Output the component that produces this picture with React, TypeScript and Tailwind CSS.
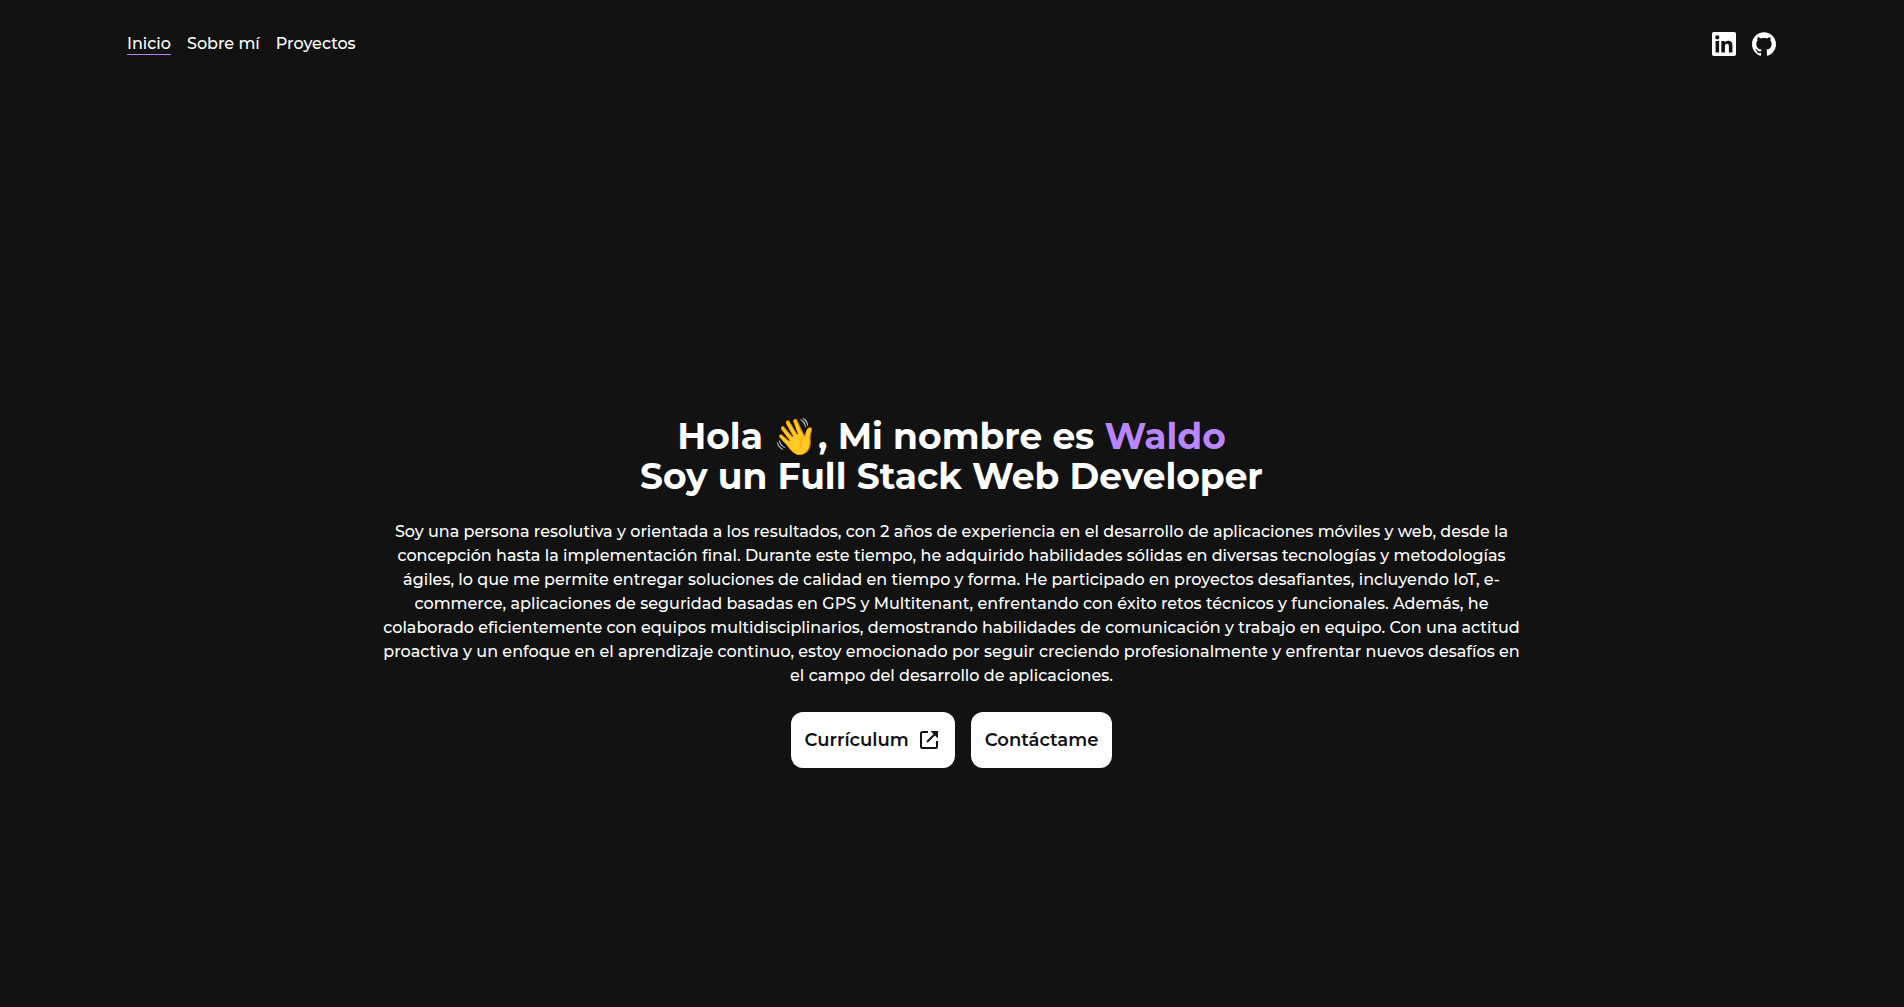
import { SiGithub } from "react-icons/si";

const links = [
  { label: "Inicio", href: "#inicio", active: true },
  { label: "Sobre mí", href: "#sobre-mi", active: false },
  { label: "Proyectos", href: "#proyectos", active: false },
];

function LinkedinIcon() {
  return (
    <svg viewBox="0 0 24 24" fill="currentColor" className="size-6" aria-hidden="true">
      <path d="M20.447 20.452h-3.554v-5.569c0-1.328-.027-3.037-1.852-3.037-1.853 0-2.136 1.445-2.136 2.939v5.667H9.351V9h3.414v1.561h.046c.477-.9 1.637-1.85 3.37-1.85 3.601 0 4.267 2.37 4.267 5.455v6.286zM5.337 7.433c-1.144 0-2.063-.926-2.063-2.065 0-1.138.92-2.063 2.063-2.063 1.14 0 2.064.925 2.064 2.063 0 1.139-.925 2.065-2.064 2.065zm1.782 13.019H3.555V9h3.564v11.452zM22.225 0H1.771C.792 0 0 .774 0 1.729v20.542C0 23.227.792 24 1.771 24h20.451C23.2 24 24 23.227 24 22.271V1.729C24 .774 23.2 0 22.222 0h.003z" />
    </svg>
  );
}

function OpenInNewIcon() {
  return (
    <svg viewBox="0 0 24 24" className="size-6" aria-hidden="true">
      <path
        d="M11 4H5.5A1.5 1.5 0 0 0 4 5.500V18.500A1.500 1.500 0 0 0 5.500 20H18.500A1.500 1.500 0 0 0 20 18.500V13M10 14L18 6"
        fill="none"
        stroke="currentColor"
        strokeWidth="2"
      />
      <path d="M13.500 3H21v7.500z" fill="currentColor" />
    </svg>
  );
}

function Header() {
  return (
    <header className="flex items-center justify-between px-[127px] py-8">
      <nav className="flex gap-4">
        {links.map((link) => (
          <a
            key={link.label}
            href={link.href}
            className={
              link.active
                ? "border-b border-[#bb86fc] leading-5"
                : "border-b border-transparent leading-5"
            }
          >
            {link.label}
          </a>
        ))}
      </nav>
      <div className="flex gap-4">
        <a href="#linkedin" aria-label="LinkedIn">
          <LinkedinIcon />
        </a>
        <a href="#github" aria-label="GitHub">
          <SiGithub className="size-6" />
        </a>
      </div>
    </header>
  );
}

export default function App() {
  return (
    <div className="flex min-h-screen flex-col bg-[#121212] pr-px font-['Montserrat','Inter',sans-serif] text-base font-medium text-white">
      <Header />
      <main className="flex flex-1 flex-col items-center justify-center gap-6 pt-22 text-center">
        <h1 className="text-4xl font-bold">
          Hola 👋, Mi nombre es <span className="text-[#bb86fc]">Waldo</span>
          <br />
          Soy un Full Stack Web Developer
        </h1>
        <p className="w-3/5">
          Soy una persona resolutiva y orientada a los resultados, con 2 años de
          experiencia en el desarrollo de aplicaciones móviles y web, desde la
          concepción hasta la implementación final. Durante este tiempo, he
          adquirido habilidades sólidas en diversas tecnologías y metodologías
          ágiles, lo que me permite entregar soluciones de calidad en tiempo y
          forma. He participado en proyectos desafiantes, incluyendo IoT,
          e-commerce, aplicaciones de seguridad basadas en GPS y Multitenant,
          enfrentando con éxito retos técnicos y funcionales. Además, he
          colaborado eficientemente con equipos multidisciplinarios, demostrando
          habilidades de comunicación y trabajo en equipo. Con una actitud
          proactiva y un enfoque en el aprendizaje continuo, estoy emocionado
          por seguir creciendo profesionalmente y enfrentar nuevos desafíos en
          el campo del desarrollo de aplicaciones.
        </p>
        <div className="flex gap-4 text-lg font-semibold text-[#121212]">
          <button className="flex items-center gap-2 rounded-xl bg-white p-3.5">
            Currículum
            <OpenInNewIcon />
          </button>
          <button className="rounded-xl bg-white p-3.5">Contáctame</button>
        </div>
      </main>
    </div>
  );
}
